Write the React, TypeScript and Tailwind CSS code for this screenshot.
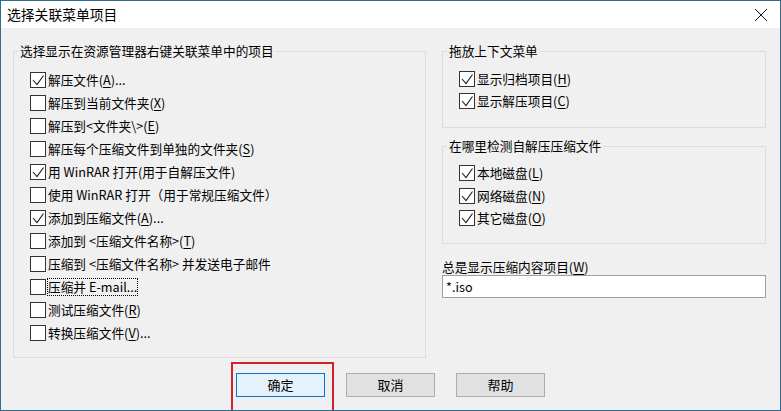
import React from "react";

const FONT = { fontFamily: '"Noto Sans CJK SC", "Noto Sans", sans-serif' };

// "&X" marks the mnemonic letter that gets underlined
const Mnemonic = ({ text }: { text: string }) => {
  const parts = text.split("&");
  return (
    <>
      {parts[0]}
      {parts.slice(1).map((p, i) => (
        <React.Fragment key={i}>
          <span className="underline underline-offset-2">{p[0]}</span>
          {p.slice(1)}
        </React.Fragment>
      ))}
    </>
  );
};

const Box = ({ checked }: { checked?: boolean }) => (
  <span className="w-[16px] h-[16px] border border-[#333333] bg-white flex items-center justify-center shrink-0">
    {checked && (
      <svg viewBox="0 0 14 14" className="w-[14px] h-[14px]">
        <path d="M2 7 L6 11.5 L12.5 2.5" stroke="#1a1a1a" strokeWidth="1.1" fill="none" />
      </svg>
    )}
  </span>
);

const Row = ({ label, checked, focus, h = "h-[23px]" }: { label: string; checked?: boolean; focus?: boolean; h?: string }) => (
  <div className={`flex items-center gap-[2px] ${h}`}>
    <Box checked={checked} />
    <span className={`whitespace-nowrap leading-[16px] ${focus ? "outline outline-1 outline-dotted outline-black" : ""}`}>
      <Mnemonic text={label} />
    </span>
  </div>
);

const leftItems: { label: string; checked?: boolean; focus?: boolean }[] = [
  { label: "解压文件(&A)...", checked: true },
  { label: "解压到当前文件夹(&X)" },
  { label: "解压到<文件夹\\>(&E)" },
  { label: "解压每个压缩文件到单独的文件夹(&S)" },
  { label: "用 WinRAR 打开(用于自解压文件)", checked: true },
  { label: "使用 WinRAR 打开（用于常规压缩文件）" },
  { label: "添加到压缩文件(&A)...", checked: true },
  { label: "添加到 <压缩文件名称>(&T)" },
  { label: "压缩到 <压缩文件名称> 并发送电子邮件" },
  { label: "压缩并 E-mail...", focus: true },
  { label: "测试压缩文件(&R)" },
  { label: "转换压缩文件(&V)..." },
];

export default function App() {
  return (
    <div
      className="w-[781px] h-[411px] border border-[#2f6b8e] bg-[#f0f0f0] flex flex-col text-black text-[12.7px] overflow-hidden"
      style={FONT}
    >
      <div className="h-[27px] bg-white flex items-center justify-between pl-[6px] pr-[12px] shrink-0">
        <span className="text-[13.8px]">选择关联菜单项目</span>
        <svg viewBox="0 0 14 14" className="w-[14px] h-[14px]">
          <path d="M1 1 L13 13 M13 1 L1 13" stroke="#111" strokeWidth="1" />
        </svg>
      </div>

      <div className="flex-1 flex flex-col px-[12px] pt-[15px]">
        <div className="flex gap-[16px]">
          <fieldset className="w-[413px] h-[315px] border border-[#dcdcdc]">
            <legend className="ml-[4px] px-[2px] leading-[16px]">选择显示在资源管理器右键关联菜单中的项目</legend>
            <div className="pl-[16px] pt-[9px] flex flex-col">
              {leftItems.map((it, i) => (
                <Row key={i} {...it} />
              ))}
            </div>
          </fieldset>

          <div className="w-[324px] flex flex-col">
            <fieldset className="h-[85px] border border-[#dcdcdc]">
              <legend className="ml-[4px] px-[2px] leading-[16px]">拖放上下文菜单</legend>
              <div className="pl-[16px] pt-[9px] flex flex-col">
                <Row label="显示归档项目(&H)" checked h="h-[22px]" />
                <Row label="显示解压项目(&C)" checked h="h-[22px]" />
              </div>
            </fieldset>

            <fieldset className="h-[106px] mt-[10px] border border-[#dcdcdc]">
              <legend className="ml-[4px] px-[2px] leading-[16px]">在哪里检测自解压压缩文件</legend>
              <div className="pl-[16px] pt-[8px] flex flex-col">
                <Row label="本地磁盘(&L)" checked h="h-[22.5px]" />
                <Row label="网络磁盘(&N)" checked h="h-[22.5px]" />
                <Row label="其它磁盘(&O)" checked h="h-[22.5px]" />
              </div>
            </fieldset>

            <div className="mt-[15px] leading-[16px]">
              <Mnemonic text="总是显示压缩内容项目(&W)" />
            </div>
            <div className="h-[23px] border border-[#a0a0a0] bg-white flex items-center px-[3px]">*.iso</div>
          </div>
        </div>

        <div className="flex justify-center gap-[21px] mt-[15px] text-[13px]">
          <div className="relative">
            <button className="w-[89px] h-[24px] border border-[#0078d7] bg-[#e5f1fb] flex items-center justify-center">
              确定
            </button>
            <div className="absolute left-[-5px] top-[-11px] w-[103px] h-[50px] border-2 border-[#d3212d]" />
          </div>
          <button className="w-[89px] h-[24px] border border-[#adadad] bg-[#e1e1e1] flex items-center justify-center">
            取消
          </button>
          <button className="w-[89px] h-[24px] border border-[#adadad] bg-[#e1e1e1] flex items-center justify-center">
            帮助
          </button>
        </div>
      </div>
    </div>
  );
}
